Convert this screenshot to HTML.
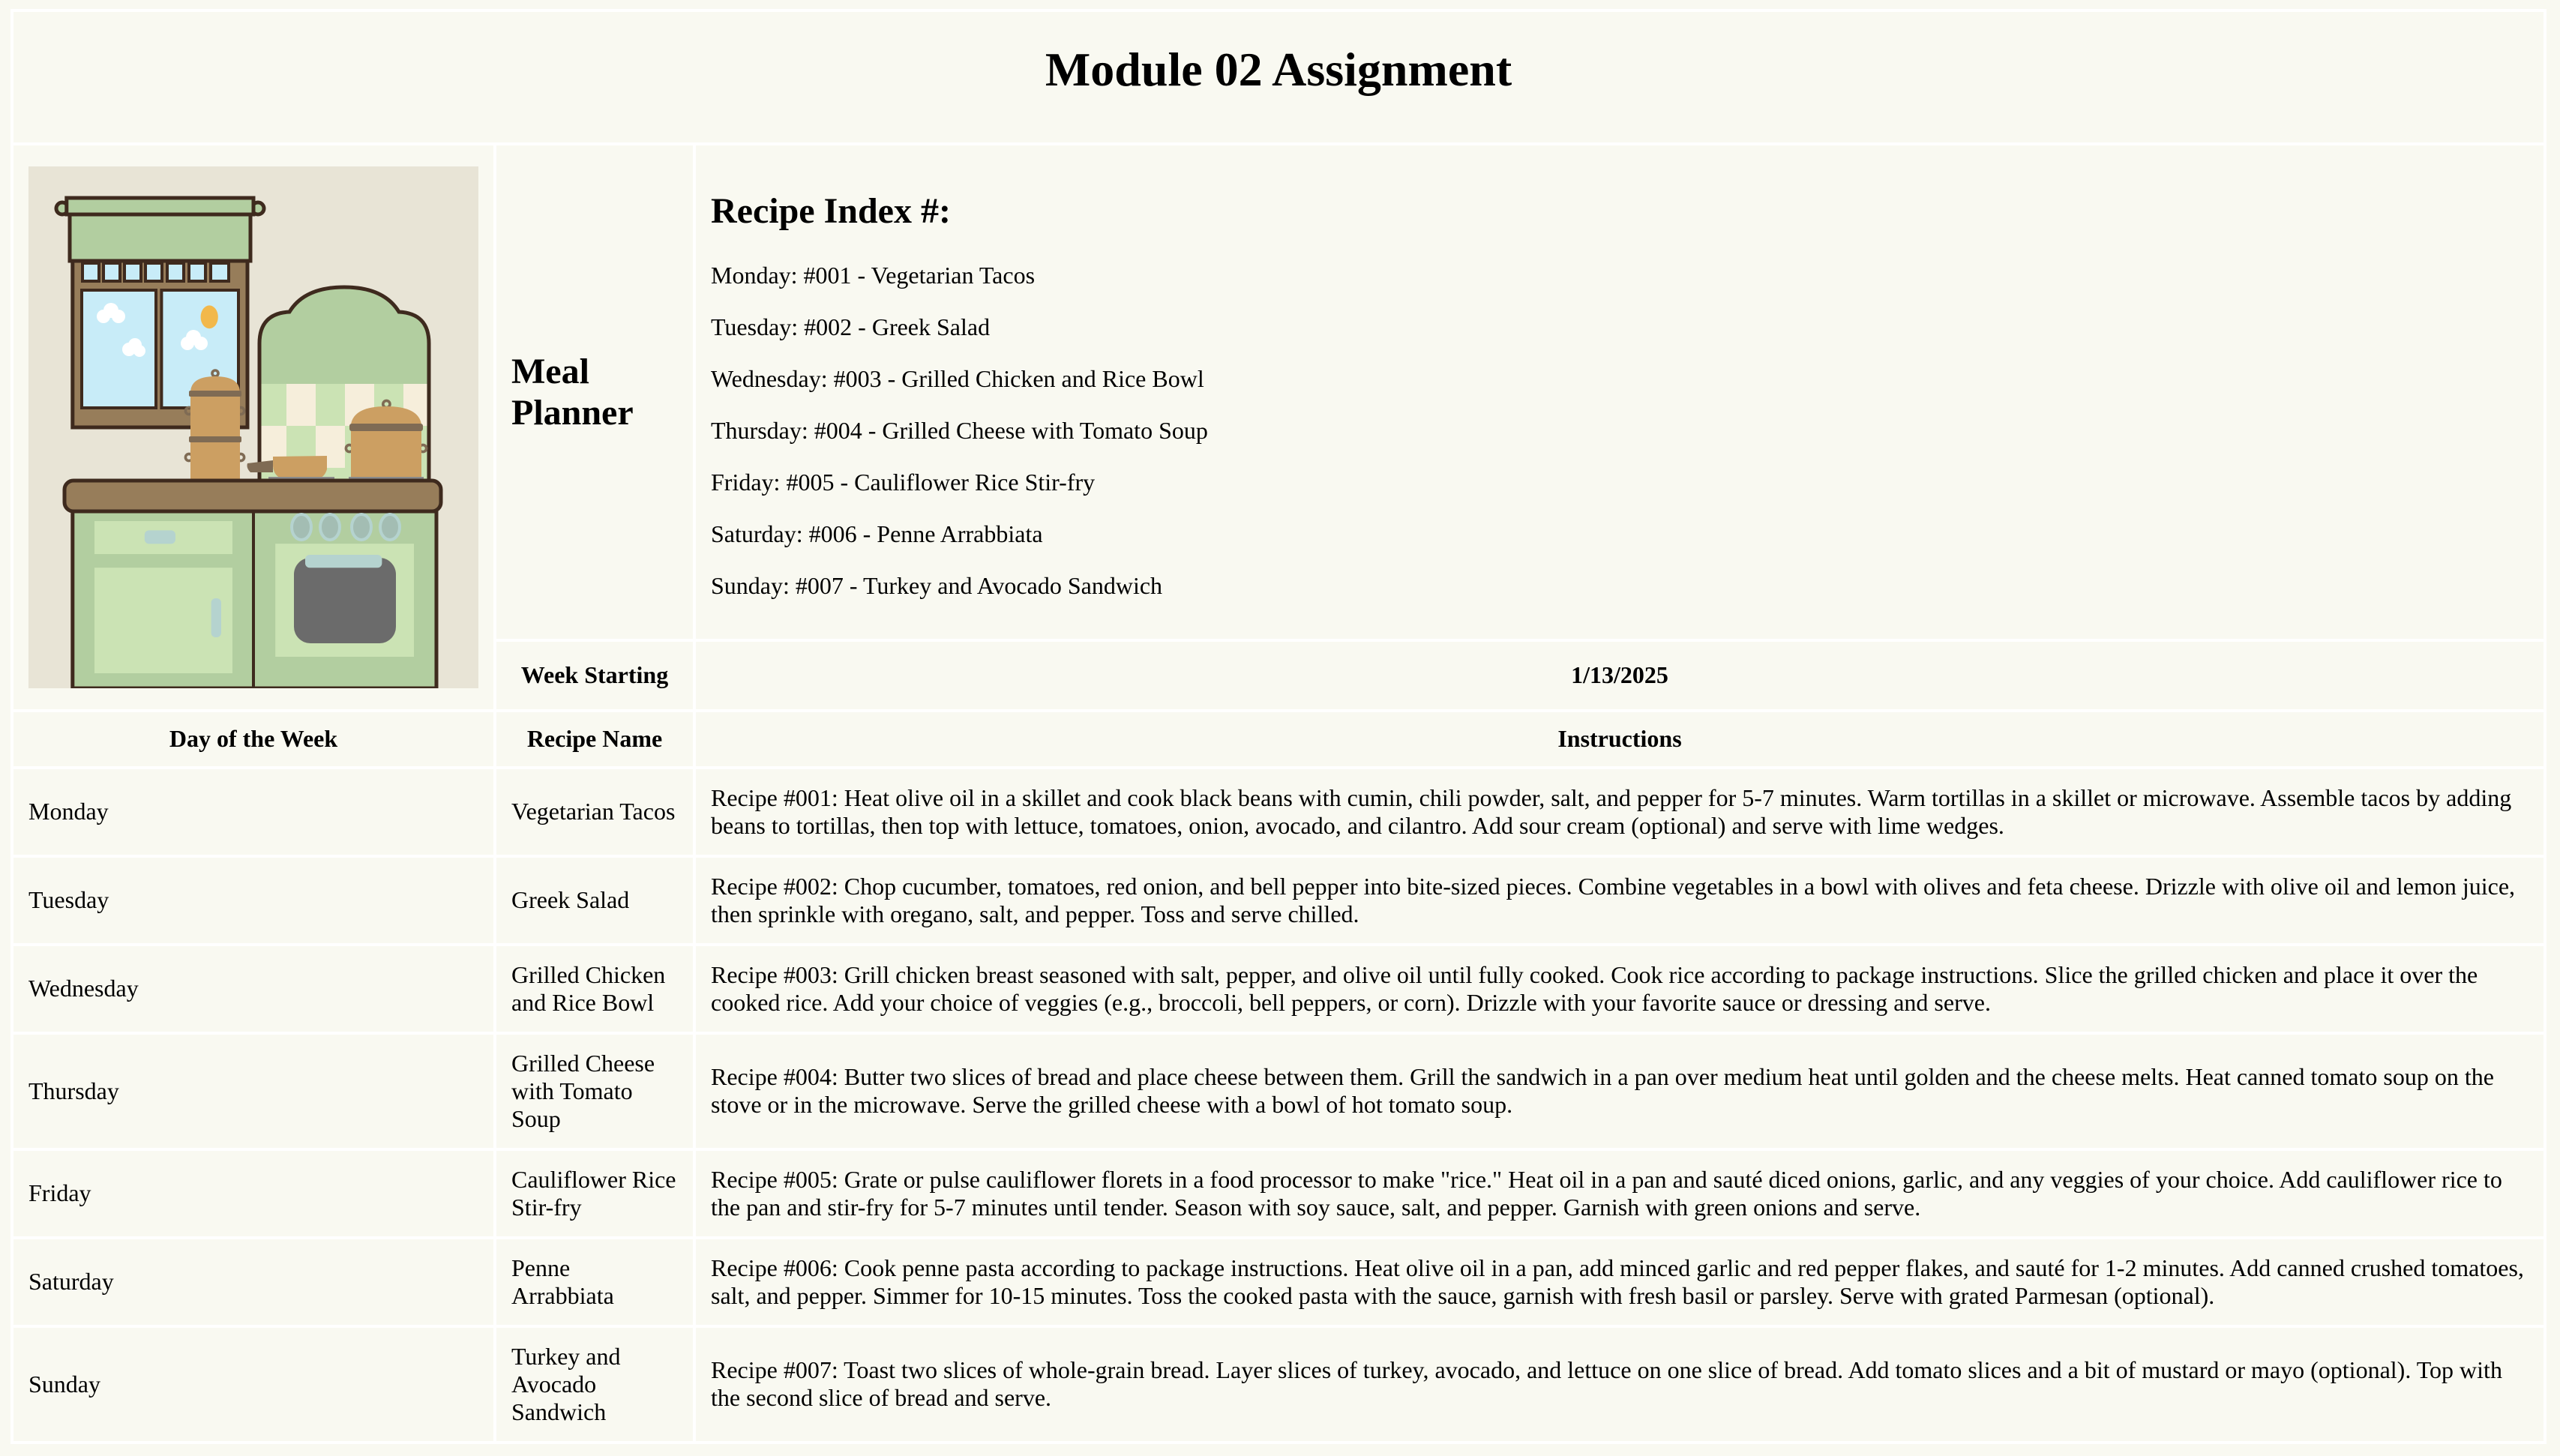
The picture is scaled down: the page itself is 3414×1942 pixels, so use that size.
<!DOCTYPE html>
<html><head><meta charset="utf-8"><style>
html{zoom:2;}
body{margin:8px;background:#f9f9f1;font-family:"Liberation Serif",serif;font-size:16px;color:#000;width:1691px;}
table{width:1691px;border-collapse:separate;border-spacing:2px;background:#ffffff;margin:-2px 0 0 -1px;}
td,th{background:#f9f9f1;padding:10px;}
th{font-weight:bold;text-align:center;}
h1{font-size:32px;margin:0;text-align:center;}
h2{font-size:24px;margin:19.9px 0;}
p{margin:16px 0;}
.title{height:67px;padding:5px 10px 15px;}
</style></head><body>
<table>
<tr><td colspan="3" class="title"><h1>Module 02 Assignment</h1></td></tr>
<tr>
<td rowspan="2" style="width:300px;vertical-align:middle;padding:10px">
<svg width="300" height="348" viewBox="0 0 300 348" style="display:block">
<rect width="300" height="348" fill="#e8e4d6"/>
<rect x="29.4" y="63" width="116.6" height="111" fill="#977d5a" stroke="#3e2a1e" stroke-width="2.5"/>
<g fill="#c8ecf8" stroke="#3e2a1e" stroke-width="2">
<rect x="36" y="64.5" width="11" height="12"/><rect x="50" y="64.5" width="11" height="12"/><rect x="64" y="64.5" width="11" height="12"/><rect x="78" y="64.5" width="11" height="12"/><rect x="92.5" y="64.5" width="11" height="12"/><rect x="107" y="64.5" width="11" height="12"/><rect x="121.5" y="64.5" width="12" height="12"/>
<rect x="35.5" y="82.5" width="49.5" height="78.5"/><rect x="88.7" y="82.5" width="51.3" height="78.5"/>
</g>
<ellipse cx="120.6" cy="100.4" rx="5.8" ry="7.7" fill="#f2b84b"/>
<g fill="#fff"><circle cx="50" cy="100" r="4.5"/><circle cx="55" cy="96" r="5"/><circle cx="60" cy="100" r="4.5"/><circle cx="67" cy="122" r="4.5"/><circle cx="71" cy="119" r="4.5"/><circle cx="74" cy="123" r="4"/><circle cx="106" cy="118" r="4.5"/><circle cx="110" cy="114" r="5"/><circle cx="115" cy="118" r="4.5"/></g>
<rect x="27.5" y="32" width="120.5" height="31" fill="#b2cea0" stroke="#3e2a1e" stroke-width="2.5"/>
<circle cx="22.5" cy="28" r="4" fill="#b2cea0" stroke="#3e2a1e" stroke-width="2.5"/>
<circle cx="153" cy="28" r="4" fill="#b2cea0" stroke="#3e2a1e" stroke-width="2.5"/>
<rect x="25.4" y="21" width="124.6" height="11" fill="#b2cea0" stroke="#3e2a1e" stroke-width="2.5"/>
<clipPath id="arch"><path d="M154 209 L154 118 Q154 98 174 97 Q184 80.5 210.5 80.5 Q237 80.5 247 97 Q267 98 267 118 L267 209 Z"/></clipPath>
<g clip-path="url(#arch)">
<rect x="150" y="78" width="120" height="132" fill="#b2cea0"/>
<rect x="150" y="145" width="120" height="65" fill="#cbe3b4"/>
<g fill="#f6eedb"><rect x="172" y="145" width="19.5" height="28"/><rect x="211" y="145" width="19.5" height="28"/><rect x="250" y="145" width="19.5" height="28"/><rect x="154" y="173" width="18" height="28"/><rect x="191.5" y="173" width="19.5" height="28"/><rect x="230.5" y="173" width="19.5" height="28"/></g>
</g>
<path d="M154 209 L154 118 Q154 98 174 97 Q184 80.5 210.5 80.5 Q237 80.5 247 97 Q267 98 267 118 L267 209" fill="none" stroke="#3e2a1e" stroke-width="2.5"/>
<circle cx="124.5" cy="138" r="2" fill="none" stroke="#7f6b54" stroke-width="1.8"/>
<g stroke="#7f6b54" stroke-width="1.8" fill="none"><circle cx="107" cy="163" r="2.3"/><circle cx="141.5" cy="163" r="2.3"/><circle cx="107" cy="194" r="2.3"/><circle cx="141.5" cy="194" r="2.3"/><circle cx="214" cy="188" r="2.3"/><circle cx="263" cy="188" r="2.3"/></g>
<path d="M108 209 L108 151 Q108 140 124.5 140 Q141 140 141 151 L141 209 Z" fill="#cc9f62"/>
<rect x="107" y="149.5" width="35" height="4" rx="1" fill="#7f6b54"/>
<rect x="107" y="180" width="35" height="4" rx="1" fill="#7f6b54"/>
<path d="M146 198 L163 196 L163 204 L148 204 Q145 201 146 198Z" fill="#7f6b54"/>
<path d="M163 193.5 L199 193 L199 202 Q197 209 189 209 L171 209 Q163 207 163 199 Z" fill="#cc9f62"/>
<circle cx="238.7" cy="158.5" r="2.3" fill="none" stroke="#7f6b54" stroke-width="1.8"/>
<path d="M215 209 L215 172 Q217 160 238.7 160 Q260 160 262 172 L262 209 Z" fill="#cc9f62"/>
<rect x="214" y="171.5" width="49" height="5" rx="1.5" fill="#7f6b54"/>
<rect x="160" y="207" width="44" height="2" fill="#8a8a8a"/><rect x="213.5" y="207" width="50" height="2" fill="#8a8a8a"/>
<rect x="24" y="209.5" width="251" height="20.5" rx="6" fill="#977d5a" stroke="#3e2a1e" stroke-width="2.5"/>
<rect x="29.4" y="230" width="242.6" height="118" fill="#b2cea0" stroke="#3e2a1e" stroke-width="2.5"/>
<line x1="150" y1="230" x2="150" y2="348" stroke="#3e2a1e" stroke-width="2"/>
<rect x="44" y="236.5" width="92" height="22" fill="#cbe3b4"/>
<rect x="77.4" y="242.7" width="20.6" height="9" rx="3" fill="#b5d3cf"/>
<rect x="44" y="267.6" width="92" height="70.4" fill="#cbe3b4"/>
<rect x="121.8" y="288" width="6.7" height="26" rx="3" fill="#b5d3cf"/>
<g fill="#a3bdb3" stroke="#b5d3cf" stroke-width="2"><ellipse cx="182" cy="240.5" rx="6.5" ry="8.5"/><ellipse cx="201" cy="240.5" rx="6.5" ry="8.5"/><ellipse cx="222" cy="240.5" rx="6.5" ry="8.5"/><ellipse cx="241" cy="240.5" rx="6.5" ry="8.5"/></g>
<rect x="164.6" y="251.6" width="92.4" height="75.4" fill="#cbe3b4"/>
<rect x="177" y="261" width="68" height="57" rx="11" fill="#6b6b6b"/>
<rect x="184.5" y="259" width="51.2" height="8.6" rx="3" fill="#b5d3cf"/>
</svg>
</td>
<td style="width:111px;vertical-align:middle"><h2>Meal Planner</h2></td>
<td style="vertical-align:middle"><h2>Recipe Index #:</h2>
<p>Monday: #001 - Vegetarian Tacos</p>
<p>Tuesday: #002 - Greek Salad</p>
<p>Wednesday: #003 - Grilled Chicken and Rice Bowl</p>
<p>Thursday: #004 - Grilled Cheese with Tomato Soup</p>
<p>Friday: #005 - Cauliflower Rice Stir-fry</p>
<p>Saturday: #006 - Penne Arrabbiata</p>
<p style="margin-bottom:16px">Sunday: #007 - Turkey and Avocado Sandwich</p></td>
</tr>
<tr style="height:45px"><th>Week Starting</th><th>1/13/2025</th></tr>
<tr style="height:36px"><th style="padding:8px">Day of the Week</th><th style="padding:8px">Recipe Name</th><th style="padding:8px">Instructions</th></tr>
<tr><td>Monday</td><td>Vegetarian Tacos</td><td>Recipe #001: Heat olive oil in a skillet and cook black beans with cumin, chili powder, salt, and pepper for 5-7 minutes. Warm tortillas in a skillet or microwave. Assemble tacos by adding beans to tortillas, then top with lettuce, tomatoes, onion, avocado, and cilantro. Add sour cream (optional) and serve with lime wedges.</td></tr>
<tr><td>Tuesday</td><td>Greek Salad</td><td>Recipe #002: Chop cucumber, tomatoes, red onion, and bell pepper into bite-sized pieces. Combine vegetables in a bowl with olives and feta cheese. Drizzle with olive oil and lemon juice, then sprinkle with oregano, salt, and pepper. Toss and serve chilled.</td></tr>
<tr><td>Wednesday</td><td>Grilled Chicken and Rice Bowl</td><td>Recipe #003: Grill chicken breast seasoned with salt, pepper, and olive oil until fully cooked. Cook rice according to package instructions. Slice the grilled chicken and place it over the cooked rice. Add your choice of veggies (e.g., broccoli, bell peppers, or corn). Drizzle with your favorite sauce or dressing and serve.</td></tr>
<tr><td>Thursday</td><td>Grilled Cheese with Tomato Soup</td><td>Recipe #004: Butter two slices of bread and place cheese between them. Grill the sandwich in a pan over medium heat until golden and the cheese melts. Heat canned tomato soup on the stove or in the microwave. Serve the grilled cheese with a bowl of hot tomato soup.</td></tr>
<tr><td>Friday</td><td>Cauliflower Rice Stir-fry</td><td>Recipe #005: Grate or pulse cauliflower florets in a food processor to make "rice." Heat oil in a pan and sauté diced onions, garlic, and any veggies of your choice. Add cauliflower rice to the pan and stir-fry for 5-7 minutes until tender. Season with soy sauce, salt, and pepper. Garnish with green onions and serve.</td></tr>
<tr><td>Saturday</td><td>Penne<br>Arrabbiata</td><td>Recipe #006: Cook penne pasta according to package instructions. Heat olive oil in a pan, add minced garlic and red pepper flakes, and sauté for 1-2 minutes. Add canned crushed tomatoes, salt, and pepper. Simmer for 10-15 minutes. Toss the cooked pasta with the sauce, garnish with fresh basil or parsley. Serve with grated Parmesan (optional).</td></tr>
<tr><td>Sunday</td><td>Turkey and Avocado Sandwich</td><td>Recipe #007: Toast two slices of whole-grain bread. Layer slices of turkey, avocado, and lettuce on one slice of bread. Add tomato slices and a bit of mustard or mayo (optional). Top with the second slice of bread and serve.</td></tr>
</table>
</body></html>
